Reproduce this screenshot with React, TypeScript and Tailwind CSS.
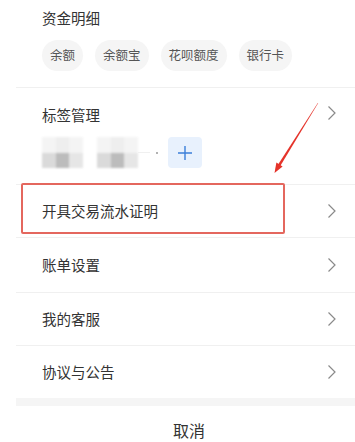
const chips = ['余额', '余额宝', '花呗额度', '银行卡'];
const rows = [
  { label: '开具交易流水证明', h: 'h-[53px]' },
  { label: '账单设置', h: 'h-[55px]' },
  { label: '我的客服', h: 'h-[53px]' },
];

function Chevron() {
  return (
    <svg width="10" height="16" viewBox="0 0 10 16" className="shrink-0">
      <polyline points="1.5,1.5 8,8 1.5,14.5" fill="none" stroke="#8a8a8a" strokeWidth="1.2" />
    </svg>
  );
}

function BlurTag({ tail }: { tail?: boolean }) {
  return (
    <div className="flex items-center">
      <div className="grid grid-cols-3 grid-rows-2 w-[41px] h-[31px] blur-[0.8px]">
        <div className="bg-[#f4f4f4]" />
        <div className="bg-[#eeeeee]" />
        <div className="bg-[#f4f4f4]" />
        <div className="bg-[#dadada]" />
        <div className="bg-[#bcbcbc]" />
        <div className="bg-[#e6e6e6]" />
      </div>
      {tail && <div className="w-[12px] h-[1px] bg-[#f0f0f0]" />}
    </div>
  );
}

export default function App() {
  return (
    <div
      className="relative w-[355px] h-[442px] bg-white overflow-hidden text-[#333]"
      style={{ fontFamily: '"Noto Sans CJK SC", "Noto Sans", sans-serif' }}
    >
      <div className="ml-4">
        {/* 资金明细 */}
        <div className="h-[88px] border-b border-[#f0f0f0] pl-[26px] pt-[8px]">
          <div className="text-[14.5px] leading-[20px]">资金明细</div>
          <div className="flex gap-[12px] mt-[12px]">
            {chips.map((c) => (
              <div
                key={c}
                className="h-[31px] px-[8px] rounded-full bg-[#f5f5f5] flex items-center text-[12.5px] text-[#555]"
              >
                {c}
              </div>
            ))}
          </div>
        </div>

        {/* 标签管理 */}
        <div className="h-[97px] border-b border-[#f0f0f0] pl-[26px] pr-[18px] pt-[17px]">
          <div className="flex items-center justify-between">
            <div className="text-[14.5px] leading-[20px]">标签管理</div>
            <div className="-mt-[4px]">
              <Chevron />
            </div>
          </div>
          <div className="flex items-center mt-[12px]">
            <BlurTag />
            <div className="ml-[14px]">
              <BlurTag tail />
            </div>
            <div className="ml-[6px] w-[2px] h-[2px] rounded-full bg-[#999]" />
            <div className="ml-[10px] w-[34px] h-[31px] rounded-[4px] bg-[#e8f1fd] flex items-center justify-center">
              <svg width="16" height="16" viewBox="0 0 16 16">
                <path d="M8 1v14M1 8h14" stroke="#3b7fd9" strokeWidth="1.4" />
              </svg>
            </div>
          </div>
        </div>

        {rows.map((r) => (
          <div
            key={r.label}
            className={`${r.h} border-b border-[#f0f0f0] pl-[26px] pr-[18px] flex items-center justify-between`}
          >
            <span className="text-[14.5px]">{r.label}</span>
            <Chevron />
          </div>
        ))}
        <div className="h-[52px] pl-[26px] pr-[18px] flex items-center justify-between">
          <span className="text-[14.5px]">协议与公告</span>
          <Chevron />
        </div>

        <div className="h-[8px] bg-[#f5f5f5]" />

        <div className="h-[36px] pt-[14px] pl-[7px] flex justify-center">
          <span className="text-[16px] leading-[20px]">取消</span>
        </div>
      </div>

      {/* annotation: red box */}
      <div className="absolute left-[21px] top-[183px] w-[264px] h-[51px] border-2 border-[#e4675e] rounded-[2px]" />

      {/* annotation: arrow */}
      <svg className="absolute left-0 top-0 pointer-events-none" width="355" height="442">
        <polygon points="318.2,102.9 317.8,103.1 277.3,165.8 279.5,167.2" fill="#e5332a" />
        <polygon points="274.5,173 282.6,166.5 276.4,162.6" fill="#e5332a" />
      </svg>
    </div>
  );
}
